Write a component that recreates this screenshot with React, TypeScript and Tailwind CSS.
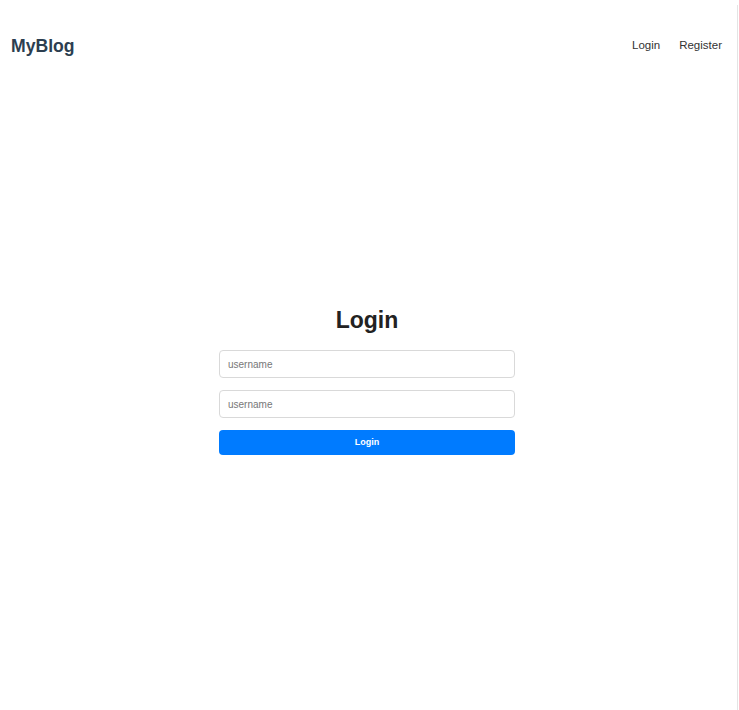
import { useState } from 'react';

const App = () => {
  const [username, setUsername] = useState('');
  const [password, setPassword] = useState('');

  return (
    <div className="pt-[5px] bg-white font-['Liberation_Sans',Arial,sans-serif]">
      <div className="w-[738px] min-h-[705px] border-r border-[#e4e4e4] flex flex-col">
        <header className="h-[82px] flex items-center justify-between pl-[11px] pr-[15px]">
          <a href="#" className="text-[17.6px] font-bold text-[#2c3e50]">
            MyBlog
          </a>
          <nav className="flex items-center gap-[19px] text-[11.5px] text-[#333]">
            <a href="#">Login</a>
            <a href="#">Register</a>
          </nav>
        </header>
        <main className="flex flex-col items-center pt-[219px] pr-[3px]">
          <h1 className="text-[23px] leading-[28px] font-bold text-[#222] mb-[16px]">Login</h1>
          <form
            className="w-[296px] flex flex-col gap-[12px]"
            onSubmit={(e) => e.preventDefault()}
          >
            <input
              className="h-[28px] w-full px-[8px] text-[10px] text-[#333] placeholder:text-[#777] border border-[#d9d9d9] rounded-[4px] outline-none"
              placeholder="username"
              value={username}
              onChange={(e) => setUsername(e.target.value)}
            />
            <input
              className="h-[28px] w-full px-[8px] text-[10px] text-[#333] placeholder:text-[#777] border border-[#d9d9d9] rounded-[4px] outline-none"
              placeholder="username"
              type="password"
              value={password}
              onChange={(e) => setPassword(e.target.value)}
            />
            <button
              type="submit"
              className="h-[25px] w-full bg-[#007bff] text-white text-[9px] font-bold rounded-[4px]"
            >
              Login
            </button>
          </form>
        </main>
      </div>
    </div>
  );
};

export default App;
